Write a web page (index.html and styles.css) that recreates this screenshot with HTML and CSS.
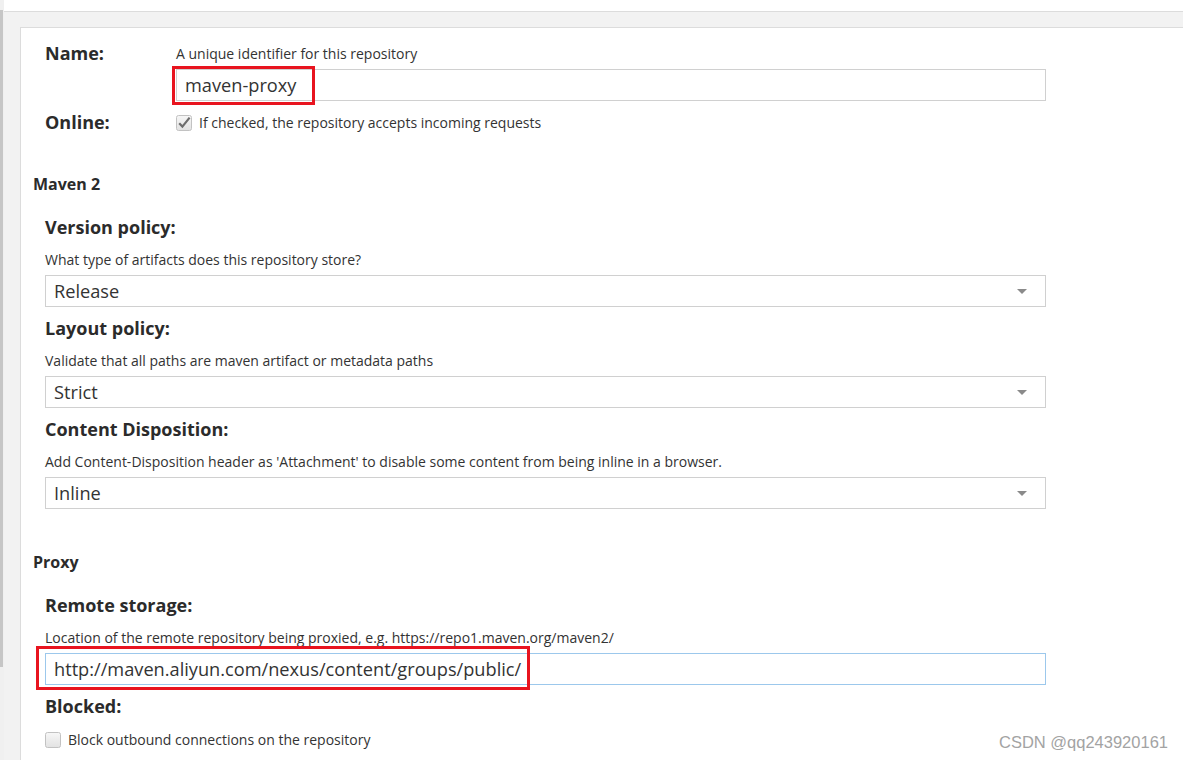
FILE: index.html
```html
<!DOCTYPE html>
<html lang="en">
<head>
    <meta charset="UTF-8">
    <meta name="viewport" content="width=device-width, initial-scale=1.0">
    <title>Create repository: maven2 (proxy)</title>
    <link rel="stylesheet" href="styles.css">
</head>
<body>
    <div class="shell">
        <div class="rail"><div class="rail-bar"></div></div>

        <div class="main">
            <div class="toolbar"></div>

            <div class="workspace">
                <div class="panel">

                    <div class="inline-field">
                        <div class="inline-label">Name:</div>
                        <div class="inline-body">
                            <div class="help">A unique identifier for this repository</div>
                            <div class="input-wrap">
                                <div class="text-input short">maven-proxy</div>
                                <span class="mark mark-name"></span>
                            </div>
                        </div>
                    </div>

                    <div class="inline-field online-row">
                        <div class="inline-label">Online:</div>
                        <div class="inline-body">
                            <label class="check">
                                <svg class="box" width="16" height="16" viewBox="0 0 16 16">
                                    <defs>
                                        <linearGradient id="boxFill" x1="0" y1="0" x2="0" y2="1">
                                            <stop offset="0" stop-color="#f7f7f7"/>
                                            <stop offset="1" stop-color="#e2e2e2"/>
                                        </linearGradient>
                                    </defs>
                                    <rect x="0.5" y="0.5" width="15" height="15" rx="2" fill="url(#boxFill)" stroke="#c2c2c2"/>
                                    <path d="M3.2 8.2 L6.4 11.6 L13.6 2.6" fill="none" stroke="#6e6e6e" stroke-width="2.2"/>
                                </svg>
                                <span>If checked, the repository accepts incoming requests</span>
                            </label>
                        </div>
                    </div>

                    <h3 class="section-title">Maven 2</h3>

                    <div class="field">
                        <div class="field-label">Version policy:</div>
                        <div class="help">What type of artifacts does this repository store?</div>
                        <div class="select">
                            <span>Release</span>
                            <span class="caret"></span>
                        </div>
                    </div>

                    <div class="field">
                        <div class="field-label">Layout policy:</div>
                        <div class="help">Validate that all paths are maven artifact or metadata paths</div>
                        <div class="select">
                            <span>Strict</span>
                            <span class="caret"></span>
                        </div>
                    </div>

                    <div class="field">
                        <div class="field-label">Content Disposition:</div>
                        <div class="help">Add Content-Disposition header as 'Attachment' to disable some content from being inline in a browser.</div>
                        <div class="select">
                            <span>Inline</span>
                            <span class="caret"></span>
                        </div>
                    </div>

                    <h3 class="section-title proxy-title">Proxy</h3>

                    <div class="field">
                        <div class="field-label">Remote storage:</div>
                        <div class="help">Location of the remote repository being proxied, e.g. https://repo1.maven.org/maven2/</div>
                        <div class="input-wrap">
                            <div class="text-input wide focused">http://maven.aliyun.com/nexus/content/groups/public/</div>
                            <span class="mark mark-url"></span>
                        </div>
                    </div>

                    <div class="field blocked">
                        <div class="field-label">Blocked:</div>
                        <label class="check">
                            <svg class="box" width="16" height="16" viewBox="0 0 16 16">
                                <rect x="0.5" y="0.5" width="15" height="15" rx="2" fill="url(#boxFill)" stroke="#c2c2c2"/>
                            </svg>
                            <span>Block outbound connections on the repository</span>
                        </label>
                    </div>

                </div>
            </div>
        </div>
    </div>

    <div class="watermark">CSDN @qq243920161</div>
</body>
</html>
```

FILE: styles.css
```css
body {
    margin: 0;
    padding: 0;
    font-family: "Open Sans", Arial, sans-serif;
    color: #333;
    background-color: #f2f2f2;
    overflow: hidden;
}

.shell {
    display: flex;
    height: 760px;
}

/* thin splitter on the far left */
.rail {
    width: 4px;
    background-color: #f0f0f0;
    padding-top: 10px;
}

.rail-bar {
    width: 3px;
    height: 657px;
    background-color: #c6c6c6;
}

.main {
    flex: 1;
    display: flex;
    flex-direction: column;
}

.toolbar {
    height: 11px;
    background-color: #fff;
    border-bottom: 1px solid #dcdcdc;
}

.workspace {
    flex: 1;
    padding: 15px 0 0 16px;
}

.panel {
    height: 100%;
    background-color: #fff;
    border-top: 1px solid #dcdcdc;
    border-left: 1px solid #dcdcdc;
    padding: 18px 0 0 12px;
    box-sizing: border-box;
}

/* Name / Online rows: label on the left */
.inline-field {
    display: flex;
    align-items: flex-start;
    margin-left: 12px;
}

.inline-label {
    width: 131px;
    margin-top: -4px;
    font-size: 18px;
    line-height: 22px;
    font-weight: bold;
    color: #2b2b2b;
}

.online-row {
    margin-top: 14px;
}

.help {
    font-size: 14px;
    line-height: 16px;
    color: #333;
    white-space: nowrap;
}

.input-wrap {
    position: relative;
    margin-top: 7px;
}

.text-input,
.select {
    height: 32px;
    box-sizing: border-box;
    border: 1px solid #d0d0d0;
    padding: 0 8px;
    font-size: 18.2px;
    line-height: 30px;
    color: #333;
    background-color: #fff;
    white-space: nowrap;
}

.text-input.short {
    width: 870px;
}

.text-input.wide {
    width: 1001px;
}

.text-input.focused {
    border-color: #9cc8ec;
}

/* red annotation boxes from the screenshot */
.mark {
    position: absolute;
    border: 3px solid #e8141f;
    pointer-events: none;
}

.mark-name {
    left: -4px;
    top: -3px;
    width: 137px;
    height: 33px;
}

.mark-url {
    left: -9px;
    top: -7px;
    width: 488px;
    height: 38px;
}

.check {
    display: flex;
    align-items: center;
    gap: 7px;
    font-size: 14px;
    line-height: 16px;
}

.check .box {
    flex: none;
}

.section-title {
    margin: 42px 0 0 0;
    font-size: 16px;
    line-height: 18px;
    font-weight: bold;
    color: #2b2b2b;
}

.section-title.proxy-title {
    margin-top: 44px;
}

.field {
    margin: 23px 0 0 12px;
}

.field + .field {
    margin-top: 10px;
}

.field-label {
    font-size: 18px;
    line-height: 22px;
    font-weight: bold;
    color: #2b2b2b;
    margin-bottom: 14px;
}

.field .help {
    margin-bottom: 7px;
}

.field .input-wrap {
    margin-top: 0;
}

.select {
    width: 1001px;
    display: flex;
    justify-content: space-between;
    align-items: center;
}

.caret {
    width: 0;
    height: 0;
    margin-right: 10px;
    border-left: 5px solid transparent;
    border-right: 5px solid transparent;
    border-top: 5px solid #8a8a8a;
}

.blocked {
    margin-top: 10px;
}

.blocked .field-label {
    margin-bottom: 15px;
}

.watermark {
    position: absolute;
    right: 15px;
    bottom: 8px;
    font-family: "Liberation Sans", Arial, sans-serif;
    font-size: 16.5px;
    color: #a3a3a3;
}
```
